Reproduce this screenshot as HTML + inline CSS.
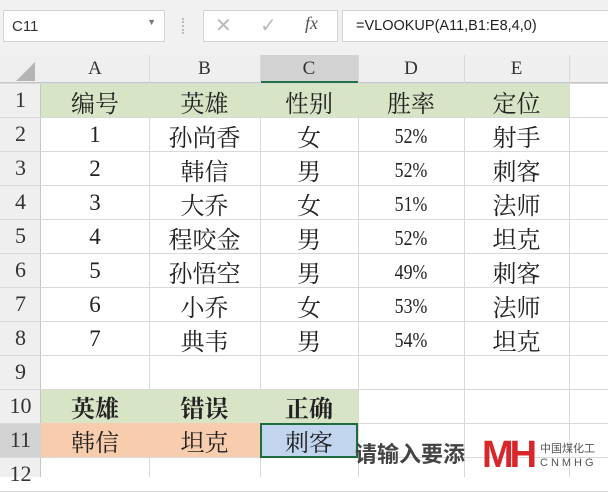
<!DOCTYPE html>
<html><head><meta charset="utf-8"><style>
*{margin:0;padding:0;box-sizing:border-box}
body{width:608px;height:477px;overflow:hidden;background:#fff;position:relative;font-family:"Liberation Serif","Noto Serif CJK SC",serif}
.tb{position:absolute;left:0;top:0;width:608px;height:55px;background:#f1f1f1}
.box{position:absolute;background:#fff;border:1px solid #d4d4d4}
.abs{position:absolute}
.c{position:absolute;display:flex;align-items:center;justify-content:center;font-size:24px;color:#222}
.hl{position:absolute;background:#d9d9d9}
</style></head><body>
<div class="tb"></div>
<div class="box" style="left:3px;top:10px;width:162px;height:32px;font-family:'Liberation Sans',sans-serif;font-size:15px;color:#333;padding:7px 0 0 8px">C11<span style="position:absolute;right:8px;top:6px;font-size:9px;color:#777">▼</span></div>
<div class="abs" style="left:182px;top:18px;width:2px;height:16px;border-left:2px dotted #bbb"></div>
<div class="box" style="left:203px;top:10px;width:135px;height:32px"></div>
<div class="abs" style="left:215px;top:13px;font-family:'Liberation Sans',sans-serif;font-size:20px;color:#bbb">✕</div>
<div class="abs" style="left:260px;top:13px;font-family:'Liberation Sans',sans-serif;font-size:20px;color:#bbb">✓</div>
<div class="abs" style="left:305px;top:13px;font-size:18px;font-style:italic;color:#555">fx</div>
<div class="box" style="left:342px;top:10px;width:270px;height:32px;font-family:'Liberation Sans',sans-serif;font-size:14.5px;color:#222;padding:7px 0 0 13px">=VLOOKUP(A11,B1:E8,4,0)</div>

<div class="abs" style="left:0;top:55px;width:608px;height:28px;background:#efefef;border-bottom:1px solid #c6c6c6"></div>
<div class="abs" style="left:16px;top:62px;width:0;height:0;border-left:19px solid transparent;border-bottom:19px solid #b4b4b4"></div>
<div class="abs" style="left:260px;top:55px;width:98px;height:28px;background:#d2d2d2;border-bottom:2px solid #217346"></div>
<div class="abs" style="left:0;top:83px;width:41px;height:394px;background:#efefef;border-right:1px solid #c6c6c6"></div>
<div class="abs" style="left:0;top:423px;width:41px;height:34px;background:#d2d2d2"></div>

<div id="grid"></div>

<div class="abs" style="left:41px;top:84px;width:528px;height:33px;background:#d8e4c6"></div>
<div class="abs" style="left:41px;top:390px;width:317px;height:33px;background:#d8e4c6"></div>
<div class="abs" style="left:41px;top:423px;width:219px;height:34px;background:#f8cdad"></div>
<div class="abs" style="left:260px;top:423px;width:98px;height:35px;background:#c2d5ee;border:2px solid #1e6b3e"></div>

<div id="g"></div>
<div class="abs" style="left:355px;top:437px;font-size:22px;font-weight:bold;color:#444;font-family:'Liberation Sans','Noto Sans CJK SC',sans-serif">请输入要添</div>
<div class="abs" style="left:482px;top:436px;font-family:'Liberation Sans',sans-serif;font-size:38px;font-weight:bold;color:#d9262a;letter-spacing:-4px;line-height:38px">MH</div>
<div class="abs" style="left:540px;top:440px;font-family:'Liberation Sans','Noto Sans CJK SC',sans-serif;font-size:11px;color:#555">中国煤化工</div>
<div class="abs" style="left:540px;top:457px;font-family:'Liberation Sans',sans-serif;font-size:11px;color:#555;letter-spacing:3px">CNMHG</div>
<script>
var cols=[41,149,260,358,464,569,608],L="ABCDE",h="",gl="";
var rowsTop=83,rh=34;
for(var i=1;i<cols.length-1;i++){gl+='<div class="hl" style="left:'+cols[i]+'px;top:55px;width:1px;height:422px"></div>';}
for(var r=0;r<=12;r++){var y=rowsTop+r*rh;gl+='<div class="hl" style="left:0;top:'+y+'px;width:608px;height:1px"></div>';}
document.getElementById('grid').innerHTML=gl;
for(var i=0;i<5;i++)h+='<div class="c" style="left:'+cols[i]+'px;top:55px;width:'+(cols[i+1]-cols[i])+'px;height:28px;font-size:19px;color:#333">'+L[i]+'</div>';
for(var r=1;r<=12;r++)h+='<div class="c" style="left:0;top:'+(rowsTop+(r-1)*rh)+'px;width:41px;height:34px;font-size:22px;color:#333">'+r+'</div>';
var d=[["编号","英雄","性别","胜率","定位"],["1","孙尚香","女","52%","射手"],["2","韩信","男","52%","刺客"],["3","大乔","女","51%","法师"],["4","程咬金","男","52%","坦克"],["5","孙悟空","男","49%","刺客"],["6","小乔","女","53%","法师"],["7","典韦","男","54%","坦克"]];
for(var r=0;r<d.length;r++)for(var c=0;c<5;c++){var p=/%/.test(d[r][c]);var fs=p?21:(/^\d$/.test(d[r][c])?23:24);h+='<div class="c" style="left:'+cols[c]+'px;top:'+(rowsTop+r*rh+(p?2:1))+'px;width:'+(cols[c+1]-cols[c])+'px;height:34px;font-size:'+fs+'px;'+(p?'transform:scaleX(0.85);':'')+'">'+d[r][c]+'</div>';}
var e=[["英雄","错误","正确"],["韩信","坦克","刺客"]];
for(var r=0;r<2;r++)for(var c=0;c<3;c++)h+='<div class="c" style="left:'+cols[c]+'px;top:'+(rowsTop+(9+r)*rh)+'px;width:'+(cols[c+1]-cols[c])+'px;height:34px;'+(r==0?'font-weight:bold;':'')+'">'+e[r][c]+'</div>';
document.getElementById('g').innerHTML=h;
</script>
</body></html>
